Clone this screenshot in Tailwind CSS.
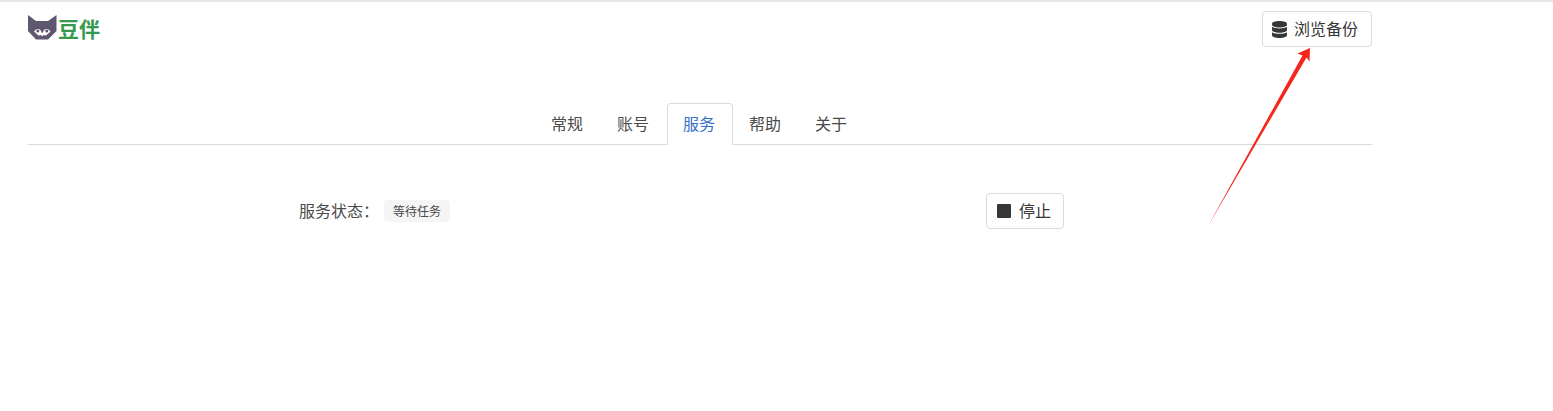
<!DOCTYPE html>
<html>
<head>
    <title>豆伴</title>
    <meta charset="utf-8">
    <script src="https://cdn.jsdelivr.net/npm/@tailwindcss/browser@4"></script>
</head>
<body class="relative h-[411px] overflow-hidden bg-white border-t-2 border-[#e8e8e8] text-[#4a4a4a] font-['Liberation_Sans','Noto_Sans_CJK_SC',sans-serif]">
    <div class="w-[1344px] ml-[28px]">
        <!-- header -->
        <div class="flex justify-between items-start pt-[9px]">
            <a class="flex items-center h-[36px]">
                <svg class="w-[29px] h-[25px] mr-[1px] -mt-[4px]" viewBox="0 0 29 25">
                    <path fill="#5f566f" d="M0 0 L8 6 H20 L28.500 0 V16 L20 24.500 H8 L0 16 Z"/>
                    <path fill="#fff" d="M6 16.500 Q9 12.500 12.500 15 L14.200 18.500 L16 15 Q19.500 12.500 22.500 16.500 L18 20.500 L15.500 20 L14.200 21.500 L13 20 L10.500 20.500 Z"/>
                    <circle cx="9.800" cy="16" r="1.500" fill="#5f566f"/>
                    <circle cx="18.800" cy="16" r="1.500" fill="#5f566f"/>
                </svg>
                <span class="text-[21px] leading-none font-bold text-[#34994a] pt-[1px]">豆伴</span>
            </a>
            <a class="flex items-center justify-center w-[110px] h-[36px] pr-[4px] border border-[#dbdbdb] rounded-[4px] text-[16px] text-[#363636]">
                <svg class="w-[15px] h-[17px] mr-[7px]" viewBox="0 0 448 512" fill="#363636">
                    <path d="M448 73.100v45.700C448 159.100 347.700 192 224 192S0 159.100 0 118.900V73.100C0 32.900 100.300 0 224 0s224 32.900 224 73.100zM448 176v102.900C448 319.100 347.700 352 224 352S0 319.100 0 278.900V176c48.100 33.100 136.200 48.600 224 48.600S399.900 209.100 448 176zm0 160v102.900C448 479.100 347.700 512 224 512S0 479.100 0 438.900V336c48.100 33.100 136.200 48.600 224 48.600S399.900 369.100 448 336z"/>
                </svg>
                <span class="pt-[2px]">浏览备份</span>
            </a>
        </div>

        <!-- tabs -->
        <ul class="flex justify-center mt-[56px] border-b border-[#dbdbdb] text-[16px] h-[42px]">
            <li class="w-[66px] h-[42px] pt-[2px] pr-[2px] flex items-center justify-center">常规</li>
            <li class="w-[66px] h-[42px] pt-[2px] pr-[2px] flex items-center justify-center">账号</li>
            <li class="w-[66px] h-[42px] pt-[2px] pr-[2px] flex items-center justify-center text-[#3570c8] bg-white border border-[#dbdbdb] border-b-white rounded-t-[4px]">服务</li>
            <li class="w-[66px] h-[42px] pt-[2px] pr-[2px] flex items-center justify-center">帮助</li>
            <li class="w-[66px] h-[42px] pt-[2px] pr-[2px] flex items-center justify-center">关于</li>
        </ul>

        <!-- service status -->
        <div class="flex justify-between items-center w-[765px] ml-[271px] mt-[48px] h-[36px]">
            <div class="flex items-center">
                <span class="text-[16px] w-[85px] pt-[2px]">服务状态：</span>
                <span class="flex items-center justify-center w-[66px] h-[22px] pt-[2px] bg-[#f5f5f5] rounded-[4px] text-[12px]">等待任务</span>
            </div>
            <a class="flex items-center justify-center w-[78px] h-[36px] pr-[2px] border border-[#dbdbdb] rounded-[4px] text-[16px] text-[#363636]">
                <span class="block w-[14px] h-[14px] bg-[#363636] rounded-[1px] mr-[8px]"></span>
                <span class="pt-[2px]">停止</span>
            </a>
        </div>
    </div>

    <!-- red annotation arrow -->
    <svg class="absolute left-0 -top-[2px] pointer-events-none" width="1553" height="411" viewBox="0 0 1553 411">
        <path fill="#f5261b" d="M1207.500 227 L1302.500 55.500 L1297.500 53.500 L1310 48 L1309.500 61.500 L1306.500 57.500 Z"/>
    </svg>
</body>
</html>
